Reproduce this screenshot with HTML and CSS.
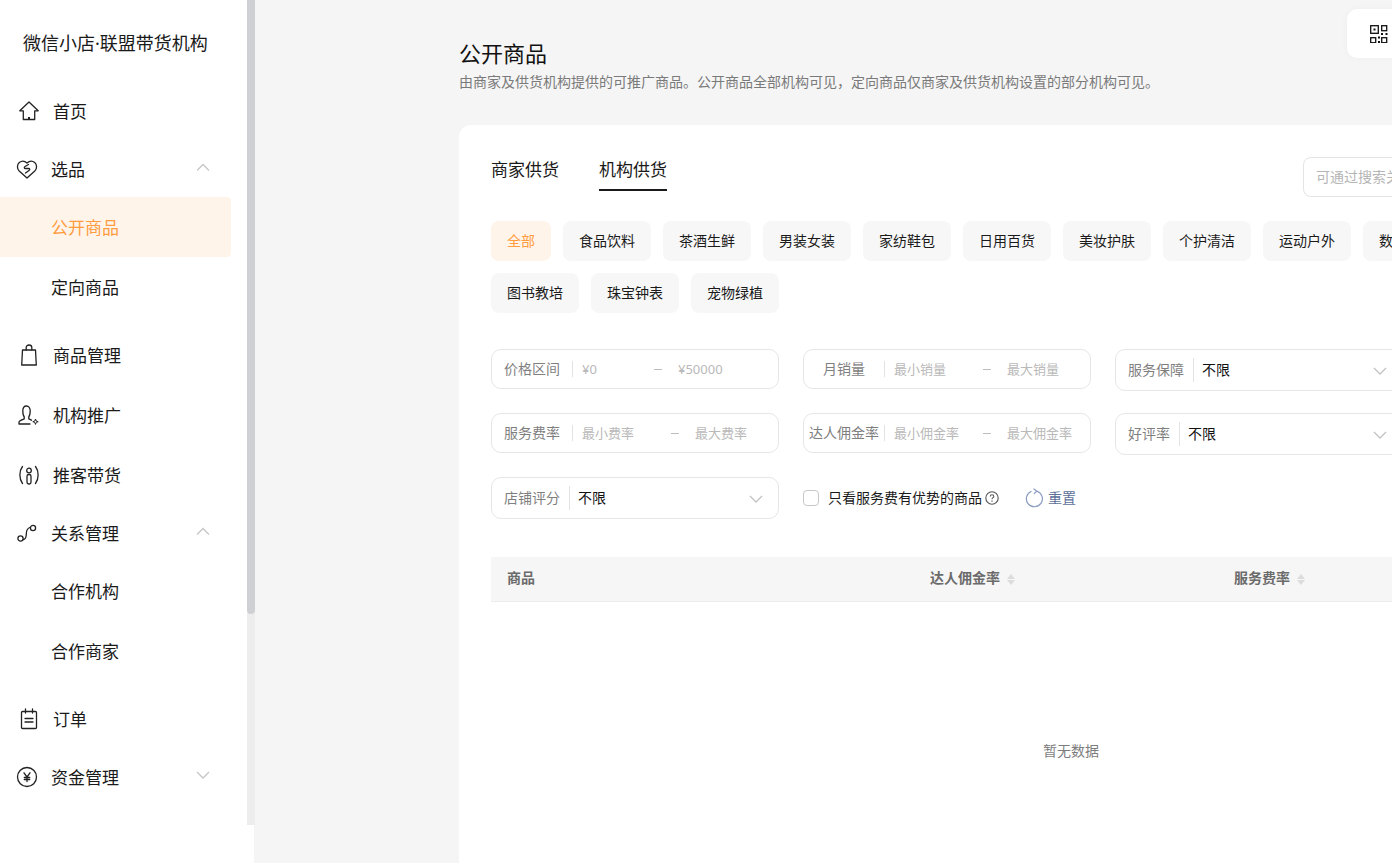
FILE: index.html
```html
<!DOCTYPE html>
<html lang="zh-CN">
<head>
<meta charset="utf-8">
<title>公开商品</title>
<link rel="stylesheet" href="styles.css">
</head>
<body>
<div class="app">
  <aside class="sidebar">
    <div class="side-inner">
      <div class="logo">微信小店<span class="dot">·</span>联盟带货机构</div>
      <nav class="nav">
        <a class="item lone">
          <svg class="ic" viewBox="0 0 22 22"><path d="M11 2 1.800 10.800h3.500v8.700h11.400v-8.700h3.500z" class="st"/><path d="M11 17v2.500" class="st2"/></svg>
          <span>首页</span>
        </a>
        <div class="group">
          <a class="item head">
            <svg class="ic" viewBox="0 0 22 22"><path d="M11 20 3.200 13C.8 10.600.9 6.600 3.300 4.500 5.800 2.500 8.800 3 11 5c2.200-2 5.200-2.500 7.700-.5 2.400 2.100 2.500 6.100.1 8.500z" class="st"/><path d="M12.500 6.500 9 8.500c-1.200.8-.8 2 .4 2h3.200c1.200 0 1.600 1.200.4 2l-3.500 2.500" class="st"/></svg>
            <span>选品</span>
            <svg class="chev" viewBox="0 0 14 8"><path d="M1 7.500 7 1.500l6 6"/></svg>
          </a>
          <a class="item sub active"><span>公开商品</span></a>
          <a class="item sub"><span>定向商品</span></a>
        </div>
        <a class="item lone">
          <svg class="ic" viewBox="0 0 22 22"><path d="M4.500 6h13l.8 15H3.700z" class="st"/><path d="M8.200 6V3.500C8.200 2 9.400 1 11 1s2.800 1 2.800 2.500V6" class="st"/></svg>
          <span>商品管理</span>
        </a>
        <a class="item lone">
          <svg class="ic" viewBox="0 0 22 22"><path d="M1 20v-1.800c0-1.600 4-2.700 5.200-3.300v-2.200C5 11.500 4.800 9.500 4.800 7 4.800 3.800 6.300 2 8.500 2s3.700 1.800 3.700 5c0 2.500-.2 4.500-1.400 5.700v2.200l2.700 1.300M1 20h11" class="st"/><path d="m17.500 15 .7 2 2 .7-2 .7-.7 2-.7-2-2-.7 2-.7z" class="st3"/></svg>
          <span>机构推广</span>
        </a>
        <a class="item lone">
          <svg class="ic" viewBox="0 0 22 22"><path d="M4.500 2.500C1 7 1 15 4.500 19.500M17.500 2.500C21 7 21 15 17.500 19.500" class="st"/><circle cx="11" cy="6.500" r="2.300" class="st"/><rect x="9" y="10.500" width="4" height="9.500" rx="1.800" class="st"/></svg>
          <span>推客带货</span>
        </a>
        <div class="group">
          <a class="item head">
            <svg class="ic" viewBox="0 0 22 22"><circle cx="4.500" cy="16.500" r="2.600" class="st"/><circle cx="17" cy="6" r="2.600" class="st"/><path d="M7.500 17.500c2.500-.5 2.800-2.500 2.800-5.500s.3-5.500 3.500-6.500" class="st"/></svg>
            <span>关系管理</span>
            <svg class="chev" viewBox="0 0 14 8"><path d="M1 7.500 7 1.500l6 6"/></svg>
          </a>
          <a class="item sub"><span>合作机构</span></a>
          <a class="item sub"><span>合作商家</span></a>
        </div>
        <a class="item lone">
          <svg class="ic" viewBox="0 0 22 22"><rect x="3.500" y="3.500" width="15" height="17" rx="1" class="st"/><path d="M7.500 1v4M14.500 1v4M7 10.500h8M7 14h8" class="st"/></svg>
          <span>订单</span>
        </a>
        <a class="item head">
          <svg class="ic" viewBox="0 0 22 22"><circle cx="11" cy="11" r="9.500" class="st"/><path d="M8 6.800 11 11l3-4.200M11 11v4.500M8.300 11.500h5.400M8.300 13.500h5.400" class="st"/></svg>
          <span>资金管理</span>
          <svg class="chev" viewBox="0 0 14 8"><path d="M1 1l6 6 6-6"/></svg>
        </a>
      </nav>
    </div>
    <div class="track"><div class="thumb"></div></div>
  </aside>

  <main class="main">
    <div class="qr" role="img" aria-label="二维码">
      <svg viewBox="0 0 18 18" width="18" height="18"><g fill="none" stroke="#111" stroke-width="1.300"><rect x=".7" y=".7" width="7.600" height="7.600"/><rect x="11.700" y=".7" width="5" height="5"/><rect x=".7" y="12.700" width="5" height="5"/><rect x="11.700" y="12.700" width="5" height="5"/></g><g fill="#111"><rect x="3.500" y="3.500" width="2" height="2"/><rect x="11" y="8" width="2" height="2"/><rect x="15.500" y="8" width="2" height="2"/><rect x="8" y="11.500" width="2" height="2"/><rect x="8" y="16" width="2" height="2"/></g></svg>
    </div>
    <header class="page-head">
      <h1>公开商品</h1>
      <p>由商家及供货机构提供的可推广商品。公开商品全部机构可见，定向商品仅商家及供货机构设置的部分机构可见。</p>
    </header>
    <section class="card">
      <div class="tabbar">
        <div class="tabs">
          <span class="tab">商家供货</span>
          <span class="tab on">机构供货</span>
        </div>
        <div class="search">可通过搜索关键词查找商品</div>
      </div>
      <div class="chips">
        <span class="chip sel">全部</span><span class="chip">食品饮料</span><span class="chip">茶酒生鲜</span><span class="chip">男装女装</span><span class="chip">家纺鞋包</span><span class="chip">日用百货</span><span class="chip">美妆护肤</span><span class="chip">个护清洁</span><span class="chip">运动户外</span><span class="chip">数码家电</span>
        <span class="chip">图书教培</span><span class="chip">珠宝钟表</span><span class="chip">宠物绿植</span>
      </div>
      <div class="filters">
        <div class="field"><span class="lab">价格区间</span><span class="val v-short num">¥0</span><span class="dash"></span><span class="val num">¥50000</span></div>
        <div class="field"><span class="lab">月销量</span><span class="val">最小销量</span><span class="dash"></span><span class="val">最大销量</span></div>
        <div class="field pick"><span class="pick-lab">服务保障</span><span class="pick-val">不限</span><svg class="down" viewBox="0 0 14 8"><path d="M1 1l6 6 6-6"/></svg></div>
        <div class="field"><span class="lab">服务费率</span><span class="val">最小费率</span><span class="dash"></span><span class="val">最大费率</span></div>
        <div class="field"><span class="lab">达人佣金率</span><span class="val">最小佣金率</span><span class="dash"></span><span class="val">最大佣金率</span></div>
        <div class="field pick"><span class="pick-lab">好评率</span><span class="pick-val">不限</span><svg class="down" viewBox="0 0 14 8"><path d="M1 1l6 6 6-6"/></svg></div>
        <div class="field pick"><span class="pick-lab">店铺评分</span><span class="pick-val">不限</span><svg class="down" viewBox="0 0 14 8"><path d="M1 1l6 6 6-6"/></svg></div>
        <div class="opts">
          <span class="box"></span>
          <span class="opt-text">只看服务费有优势的商品</span>
          <svg class="help" viewBox="0 0 14 14"><circle cx="7" cy="7" r="6.200"/><path d="M5.200 5.500C5.300 4.400 6 3.800 7 3.800s1.800.7 1.800 1.600c0 1.300-1.800 1.300-1.800 2.800"/><path d="M7 9.500v1.200"/></svg>
          <svg class="reload" viewBox="0 0 18 20"><path d="M6.500 3.300A8 8 0 1 0 12 3.200"/><path d="M8.500 .8 11.800 3 9 5.800"/></svg>
          <span class="reset">重置</span>
        </div>
      </div>
      <div class="table">
        <div class="thead">
          <span class="th th-name">商品</span>
          <span class="th th-rate">达人佣金率<i class="sort"></i></span>
          <span class="th th-fee">服务费率<i class="sort"></i></span>
        </div>
        <div class="empty">暂无数据</div>
      </div>
    </section>
  </main>
</div>
</body>
</html>
```
FILE: styles.css
```css
* { box-sizing: border-box; }
html, body { margin: 0; height: 100%; overflow: hidden; }
body {
  font-family: "Noto Sans CJK SC", "Noto Sans", sans-serif;
  color: #1a1a1a;
  background: #f5f5f5;
}
.app { display: flex; height: 863px; width: 1392px; overflow: hidden; }

/* sidebar */
.sidebar {
  flex: 0 0 254px;
  display: flex;
  align-items: flex-start;
  background: #fff;
  height: 863px;
  position: relative;
  z-index: 2;
}
.side-inner { flex: 0 0 247px; }
.track { flex: 0 0 8px; height: 825px; background: #ededed; margin-right: -1px; }
.thumb { height: 614px; background: #cfd0d3; border-radius: 0 0 4px 4px; }
.logo { height: 81px; padding: 0 0 0 23px; font-size: 18px; line-height: 84px; white-space: nowrap; }
.dot { font-family: "Noto Sans", sans-serif; }
.nav { display: flex; flex-direction: column; }
.item {
  display: flex;
  align-items: center;
  font-size: 17px;
  line-height: 24px;
  color: #1a1a1a;
  position: relative;
}
.item span { margin-bottom: 1px; }
.lone { height: 60px; padding-left: 18px; margin-bottom: 0; }
.lone .ic { margin-right: 13px; }
.head { height: 56px; padding-left: 16px; }
.head .ic { margin-right: 13px; }
.sub { height: 60px; padding-left: 51px; width: 231px; }
.group { margin-bottom: 8px; }
.active { background: #fff4ea; color: #ff9c3f; border-radius: 0 4px 4px 0; }
.ic { width: 22px; height: 22px; flex: none; }
.st { fill: none; stroke: #222; stroke-width: 1.300; stroke-linejoin: round; stroke-linecap: round; }
.st2 { fill: none; stroke: #222; stroke-width: 2; }
.st3 { fill: none; stroke: #222; stroke-width: 1; stroke-linejoin: round; }
.chev { position: absolute; left: 196px; top: 22px; width: 14px; height: 8px; fill: none; stroke: #c6c6c6; stroke-width: 1.300; }

/* main */
.main { flex: 1 0 auto; padding: 0 0 0 205px; position: relative; width: 1138px; min-width: 0; }
.qr {
  position: absolute;
  left: 1093px;
  top: 9px;
  width: 120px;
  height: 49px;
  padding: 16px 0 0 23px;
  border-radius: 10px;
  background: #fff;
  box-shadow: 0 0 8px rgba(0, 0, 0, .03);
  z-index: 3;
}
.qr svg { display: block; }
.page-head { height: 125px; padding-top: 36px; }
.page-head h1 { margin: 0; font-size: 22px; font-weight: 400; line-height: 32px; color: #111; }
.page-head p { margin: 0; font-size: 14px; line-height: 26px; color: #7a7a7a; white-space: nowrap; }
.card {
  width: 1224px;
  height: 900px;
  background: #fff;
  border-radius: 12px;
  padding: 32px;
}
.tabbar { display: flex; justify-content: space-between; height: 64px; width: 1160px; }
.tabs { display: flex; gap: 40px; align-items: flex-start; }
.tab { font-size: 17px; line-height: 23px; padding: 0 0 9px; border-bottom: 2px solid transparent; }
.tab.on { border-bottom-color: #1a1a1a; }
.search {
  width: 348px;
  height: 40px;
  border: 1px solid #e4e4e4;
  border-radius: 8px;
  padding-left: 12px;
  font-size: 14px;
  line-height: 36px;
  color: #b5b5b5;
  white-space: nowrap;
  overflow: hidden;
}
.chips { display: flex; flex-wrap: wrap; gap: 12px; width: 960px; }
.chip {
  width: 88px;
  height: 40px;
  border-radius: 8px;
  background: #f7f7f7;
  font-size: 14px;
  line-height: 38px;
  text-align: center;
  white-space: nowrap;
  color: #1a1a1a;
}
.chip.sel { width: 60px; background: #fff4ea; color: #ff9c3f; }
.filters {
  display: grid;
  grid-template-columns: 288px 288px 288px;
  grid-auto-rows: 40px;
  gap: 24px;
  margin-top: 36px;
}
.field {
  height: 40px;
  display: flex;
  align-items: center;
  border: 1px solid #e6e6e6;
  border-radius: 10px;
  font-size: 13px;
  color: #b9b9b9;
  white-space: nowrap;
}
.lab {
  flex: 0 0 81px;
  height: 16px;
  line-height: 14px;
  font-size: 14px;
  text-align: center;
  color: #7f7f7f;
  border-right: 1px solid #e3e3e3;
  margin-right: 9px;
}
.val { flex: 0 0 auto; min-width: 89px; margin-bottom: 2px; }
.val.num { font-family: "Noto Sans", sans-serif; margin-bottom: 0; }
.v-short { min-width: 72px; }
.dash { flex: 0 0 8px; height: 1px; background: #bdbdbd; margin-right: 16px; }
.pick { height: 42px; position: relative; padding-left: 12px; }
.pick-lab {
  font-size: 14px;
  height: 24px;
  line-height: 22px;
  color: #7f7f7f;
  padding-right: 9px;
  margin-right: 8px;
  border-right: 1px solid #e3e3e3;
}
.pick-val { font-size: 14px; color: #111; margin-bottom: 2px; }
.down { position: absolute; right: 15px; top: 17px; width: 14px; height: 8px; fill: none; stroke: #c2c2c2; stroke-width: 1.300; }
.opts { grid-column: 2 / 4; display: flex; align-items: center; height: 42px; }
.box { width: 16px; height: 16px; border: 1px solid #c8c8c8; border-radius: 4px; margin-right: 9px; background: #fff; }
.opt-text { font-size: 14px; color: #1a1a1a; margin-right: 3px; margin-bottom: 3px; white-space: nowrap; }
.help { width: 14px; height: 14px; fill: none; stroke: #555; stroke-width: 1.100; margin-right: 26px; }
.reload { width: 18px; height: 20px; fill: none; stroke: #8a9cc2; stroke-width: 1.200; margin-right: 5px; }
.reset { font-size: 14px; color: #5d7099; margin-bottom: 2px; }
.table { width: 1160px; margin-top: 40px; }
.thead {
  position: relative;
  height: 45px;
  background: #f6f6f6;
  border-bottom: 1px solid #ececec;
  display: flex;
  align-items: center;
  padding-left: 16px;
}
.th { font-size: 14px; font-weight: 700; color: #6b6b6b; display: inline-flex; align-items: center; white-space: nowrap; margin-bottom: 4px; }
.th-name { width: 423px; }
.th-rate { width: 304px; }
.sort { display: block; width: 8px; height: 11px; margin-left: 7px; position: relative; top: 2px; }
.sort::before, .sort::after { content: ""; position: absolute; left: 0; border-left: 4px solid transparent; border-right: 4px solid transparent; }
.sort::before { top: 0; border-bottom: 5px solid #dcdcdc; }
.sort::after { bottom: 0; border-top: 5px solid #dcdcdc; }
.empty { height: 299px; padding-top: 138px; text-align: center; font-size: 14px; line-height: 20px; color: #7d7d7d; }
```
